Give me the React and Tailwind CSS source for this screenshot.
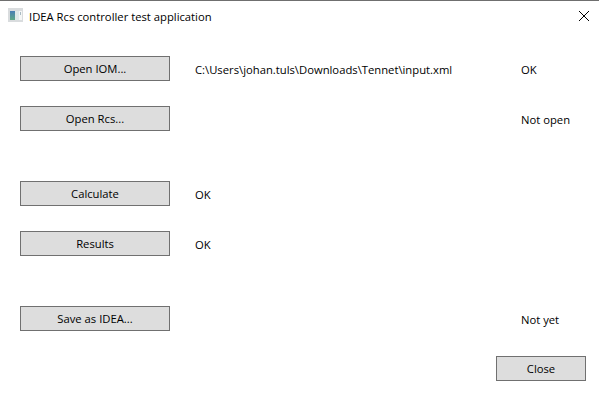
import React from 'react';

const rows = [
  { label: 'Open IOM...', middle: 'C:\\Users\\johan.tuls\\Downloads\\Tennet\\input.xml', right: 'OK', gap: 'mt-[25px]' },
  { label: 'Open Rcs...', middle: '', right: 'Not open', gap: 'mt-[25px]' },
  { label: 'Calculate', middle: 'OK', right: '', gap: 'mt-[50px]' },
  { label: 'Results', middle: 'OK', right: '', gap: 'mt-[25px]' },
  { label: 'Save as IDEA...', middle: '', right: 'Not yet', gap: 'mt-[50px]' },
];

function WinButton({ children, className }) {
  return (
    <button className={`h-[25px] border border-[#707070] bg-[#dddddd] text-center leading-[21px] text-[11.25px] text-black ${className}`}>
      {children}
    </button>
  );
}

export default function App() {
  return (
    <div className="flex h-[419px] w-[599px] flex-col overflow-hidden bg-white font-['Open_Sans',sans-serif] text-[11.25px] text-black">
      {/* Title bar */}
      <div className="flex h-[31px] items-center border-t border-[#6f6f6f] pl-2 pr-[9px]">
        <svg width="16" height="16" viewBox="0 0 16 16" className="shrink-0">
          <defs>
            <linearGradient id="pane" x1="0" y1="0" x2="0" y2="1">
              <stop offset="0" stopColor="#4a7fb5" />
              <stop offset="1" stopColor="#5fa884" />
            </linearGradient>
          </defs>
          <rect x="0" y="0" width="15" height="14" fill="#d9dcde" />
          <rect x="2" y="3" width="5" height="9" fill="url(#pane)" />
          <rect x="7" y="3" width="4" height="9" fill="#dfe9e8" />
          <rect x="11" y="3" width="3" height="9" fill="#f4f6f6" />
          <rect x="12" y="4" width="1" height="3" fill="#a9bac2" />
        </svg>
        <span className="ml-[5px] flex-1 pt-[2px]">IDEA Rcs controller test application</span>
        <svg width="12" height="12" viewBox="0 0 12 12" className="shrink-0">
          <path d="M1 1 L11 11 M11 1 L1 11" stroke="#000" strokeWidth="1" fill="none" />
        </svg>
      </div>

      {/* Rows */}
      <div className="flex flex-col px-5">
        {rows.map((row) => (
          <div key={row.label} className={`flex h-[25px] items-center ${row.gap}`}>
            <WinButton className="w-[150px]">{row.label}</WinButton>
            <span className="ml-[25px] w-[326px] pt-[4px]">{row.middle}</span>
            <span className="pt-[4px]">{row.right}</span>
          </div>
        ))}
      </div>

      <div className="mt-[25px] flex justify-end pr-[13px]">
        <WinButton className="w-[90px]">Close</WinButton>
      </div>
    </div>
  );
}
